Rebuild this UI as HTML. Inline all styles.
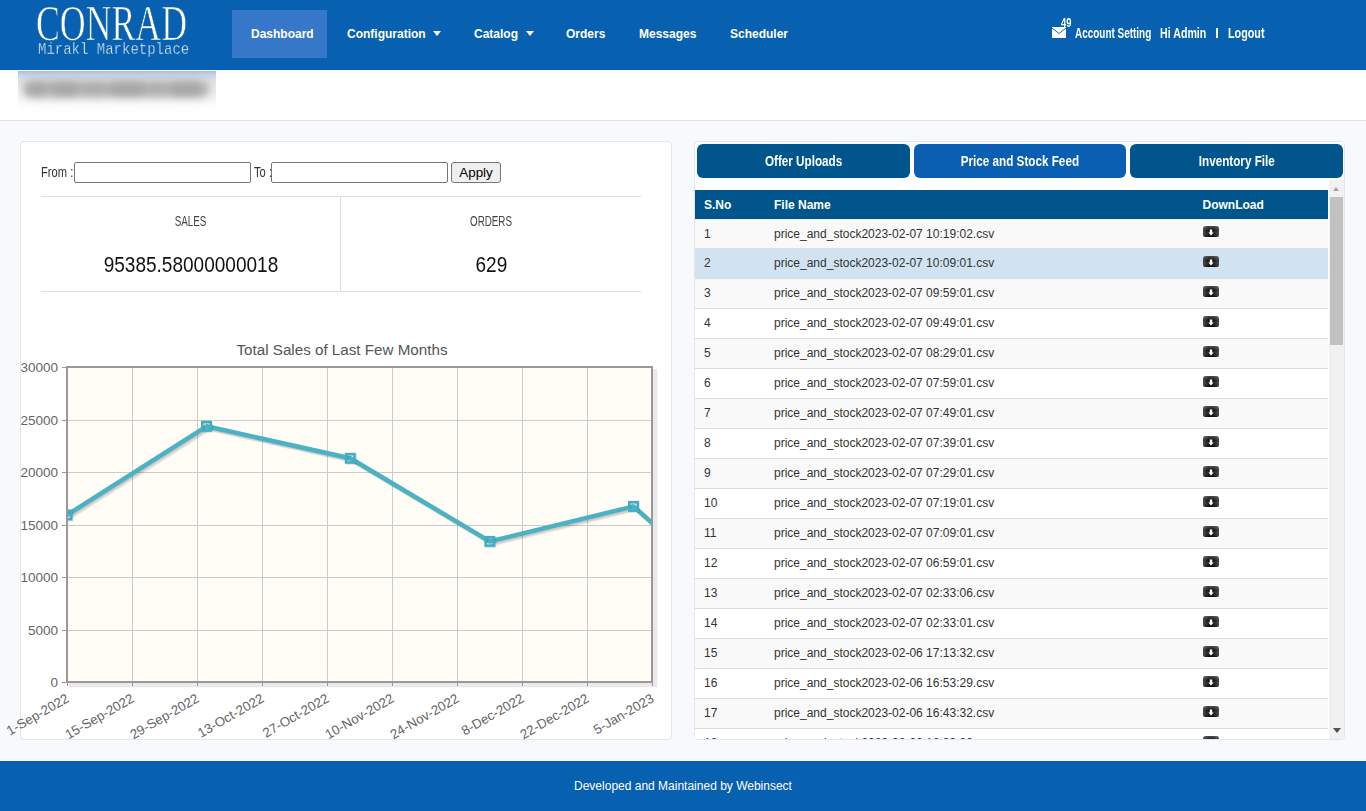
<!DOCTYPE html>
<html><head><meta charset="utf-8">
<style>
*{box-sizing:border-box}
html,body{margin:0;padding:0;width:1366px;height:811px;overflow:hidden;background:#f7f9fc;font-family:"Liberation Sans",sans-serif}
.abs{position:absolute}
#hdr{position:absolute;left:0;top:0;width:1366px;height:70px;background:#0760b0}
.nav{position:absolute;top:27px;font-weight:bold;font-size:12px;color:#fff;line-height:14px;white-space:nowrap}
.caret{position:absolute;top:31px;width:0;height:0;border-left:4px solid transparent;border-right:4px solid transparent;border-top:5px solid #fff}
#sub{position:absolute;left:0;top:70px;width:1366px;height:51px;background:#fff;border-bottom:1px solid #dfe3e8}
#foot{position:absolute;left:0;top:761px;width:1366px;height:50px;background:#0760b0;color:#fff;font-size:12px}
.panel{position:absolute;background:#fff;border:1px solid #e3e7ec;border-radius:4px}
.cond{display:inline-block;transform-origin:0 0;white-space:nowrap}
.inp{border:1px solid #767676;border-radius:2px;background:#fff}
.btn{border:1px solid #767676;border-radius:3px;background:#efefef;font-size:13.4px;line-height:19px;text-align:center;color:#000}
.stat{text-align:center;font-size:14px;line-height:16px;color:#444}
.stat{transform:scaleX(0.70)}
.big{text-align:center;font-size:22px;line-height:24px;color:#111}
.big span{display:inline-block;transform:scaleX(0.865)}
.tab{position:absolute;top:144px;height:34px;border-radius:6px;color:#fff;font-weight:bold;font-size:15px;line-height:34px;text-align:center}
.tab span{display:inline-block;transform:scaleX(0.78)}
.thead{background:#00568c;color:#fff;font-weight:bold;font-size:12px}
.thead span{position:absolute;top:8px;line-height:14px}
.trow{position:absolute;left:0;width:633px;font-size:12px;color:#333}
.trow span{position:absolute;top:7px;line-height:14px;white-space:nowrap}
.dl{position:absolute;width:16px;height:11px}
.rt{font-weight:bold;font-size:14px;line-height:16px;color:#fff;white-space:nowrap}
.rt span{display:inline-block;transform-origin:0 0}
</style></head><body>
<svg width="0" height="0" style="position:absolute"><defs>
<linearGradient id="dlh" x1="0" x2="1" y1="0" y2="0"><stop offset="0" stop-color="#444"/><stop offset="0.35" stop-color="#111"/><stop offset="0.65" stop-color="#111"/><stop offset="1" stop-color="#444"/></linearGradient>
<linearGradient id="dlv" x1="0" x2="0" y1="0" y2="1"><stop offset="0" stop-color="#fff" stop-opacity="0.25"/><stop offset="0.4" stop-color="#fff" stop-opacity="0"/><stop offset="1" stop-color="#000" stop-opacity="0.3"/></linearGradient>
<symbol id="dlicon" viewBox="0 0 16 11"><rect x="0" y="0" width="16" height="11" rx="2.5" fill="url(#dlh)"/><rect x="0" y="0" width="16" height="11" rx="2.5" fill="url(#dlv)"/><path d="M6.75 3.5 H9.25 V6.5 H10.6 L8 9.6 L5.4 6.5 H6.75 Z" fill="#fff"/></symbol>
</defs></svg>
<div id="hdr">
  <div class="abs" style="left:38px;top:0px;width:200px;height:60px">
    <div class="abs" style="left:-2px;top:-2px;font-family:'Liberation Serif',serif;font-size:50px;line-height:50px;color:#fff;-webkit-text-stroke:0.7px #0760b0;transform:scaleX(0.715);transform-origin:0 0;white-space:nowrap">CONRAD</div>
    <div class="abs" style="left:0;top:41px;font-family:'Liberation Mono',monospace;font-size:14px;line-height:14px;color:#e3ecf7;-webkit-text-stroke:0.3px #0760b0;transform:scaleY(1.15);transform-origin:0 0;white-space:nowrap">Mirakl Marketplace</div>
  </div>
  <div class="abs" style="left:232px;top:10px;width:95px;height:48px;background:#3677c9"></div>
  <div class="nav" style="left:251px">Dashboard</div>
  <div class="nav" style="left:347px">Configuration</div><div class="caret" style="left:433px"></div>
  <div class="nav" style="left:474px">Catalog</div><div class="caret" style="left:526px"></div>
  <div class="nav" style="left:566px">Orders</div>
  <div class="nav" style="left:639px">Messages</div>
  <div class="nav" style="left:730px">Scheduler</div>
  <svg class="abs" style="left:1052px;top:27px" width="14" height="11" viewBox="0 0 14 11"><rect x="0" y="0" width="14" height="11" fill="#fff"/><path d="M0 1 L7 6.5 L14 1" fill="none" stroke="#0760b0" stroke-width="0.9"/><rect x="0" y="0" width="14" height="1" fill="#fff"/></svg>
  <div class="abs rt" style="left:1061px;top:17px;font-size:12px;line-height:12px"><span style="transform:scaleX(0.78)">49</span></div>
  <div class="abs rt" style="left:1075px;top:25px"><span style="transform:scaleX(0.71)">Account Setting</span></div>
  <div class="abs rt" style="left:1160px;top:25px"><span style="transform:scaleX(0.76)">Hi Admin</span></div>
  <div class="abs" style="left:1216px;top:28px;width:2px;height:10px;background:#fff"></div>
  <div class="abs rt" style="left:1228px;top:25px"><span style="transform:scaleX(0.77)">Logout</span></div>
</div>
<div id="sub"></div>
<div class="abs" style="left:18px;top:71px;width:198px;height:40px;overflow:hidden;background:linear-gradient(#a6bedd 0px,#c9d4e1 4px,#dde1e6 9px,#e9eaec 16px,#f3f3f3 26px,#fbfbfb 33px,#ffffff 40px)">
  <div class="abs" style="left:6px;top:10px;width:186px;height:16px;background:#adadad;border-radius:8px;filter:blur(5px);opacity:0.9"></div><div class="abs" style="left:7px;top:12px;width:22px;height:12px;background:#a0a0a0;border-radius:6px;filter:blur(4px);opacity:0.7"></div><div class="abs" style="left:33px;top:12px;width:28px;height:12px;background:#a0a0a0;border-radius:6px;filter:blur(4px);opacity:0.75"></div><div class="abs" style="left:65px;top:12px;width:22px;height:12px;background:#a0a0a0;border-radius:6px;filter:blur(4px);opacity:0.45"></div><div class="abs" style="left:91px;top:12px;width:37px;height:12px;background:#a0a0a0;border-radius:6px;filter:blur(4px);opacity:0.75"></div><div class="abs" style="left:131px;top:12px;width:16px;height:12px;background:#a0a0a0;border-radius:6px;filter:blur(4px);opacity:0.45"></div><div class="abs" style="left:151px;top:12px;width:33px;height:12px;background:#a0a0a0;border-radius:6px;filter:blur(4px);opacity:0.75"></div>
</div>
<div class="panel" style="left:20px;top:141px;width:652px;height:599px"></div>
<div class="abs" style="left:41px;top:164px;font-size:14px;line-height:16px;color:#333;transform:scaleX(0.8);transform-origin:0 0;white-space:nowrap">From :</div>
<div class="abs inp" style="left:74px;top:162px;width:177px;height:21px"></div>
<div class="abs" style="left:254px;top:164px;font-size:14px;line-height:16px;color:#333;transform:scaleX(0.8);transform-origin:0 0;white-space:nowrap">To :</div>
<div class="abs inp" style="left:271px;top:162px;width:177px;height:21px"></div>
<div class="abs btn" style="left:451px;top:162px;width:50px;height:21px">Apply</div>
<div class="abs" style="left:41px;top:196px;width:600px;height:1px;background:#dddddd"></div>
<div class="abs" style="left:340px;top:197px;width:1px;height:94px;background:#dddddd"></div>
<div class="abs" style="left:41px;top:291px;width:600px;height:1px;background:#dddddd"></div>
<div class="abs stat" style="left:41px;width:299px;top:213px">SALES</div>
<div class="abs stat" style="left:341px;width:300px;top:213px">ORDERS</div>
<div class="abs big" style="left:41px;width:299px;top:253px"><span>95385.58000000018</span></div>
<div class="abs big" style="left:341px;width:300px;top:253px"><span>629</span></div>
<svg class="abs" style="left:0;top:0;overflow:visible" width="1366" height="811" viewBox="0 0 1366 811">
<defs><clipPath id="pc"><rect x="68" y="368" width="583" height="313"/></clipPath></defs>
<path d="M69 683.5 H653.5 V369" fill="none" stroke="#000" stroke-opacity="0.09" stroke-width="1.5"/>
<path d="M69 685 H655 V369" fill="none" stroke="#000" stroke-opacity="0.09" stroke-width="1.5"/>
<path d="M69 686.5 H656.5 V369" fill="none" stroke="#000" stroke-opacity="0.09" stroke-width="1.5"/>
<rect x="67" y="367" width="585" height="315" fill="#fffdf6"/>
<line x1="132.5" y1="368" x2="132.5" y2="681" stroke="#cccccc" stroke-width="1"/>
<line x1="197.5" y1="368" x2="197.5" y2="681" stroke="#cccccc" stroke-width="1"/>
<line x1="262.5" y1="368" x2="262.5" y2="681" stroke="#cccccc" stroke-width="1"/>
<line x1="327.5" y1="368" x2="327.5" y2="681" stroke="#cccccc" stroke-width="1"/>
<line x1="392.5" y1="368" x2="392.5" y2="681" stroke="#cccccc" stroke-width="1"/>
<line x1="457.5" y1="368" x2="457.5" y2="681" stroke="#cccccc" stroke-width="1"/>
<line x1="522.5" y1="368" x2="522.5" y2="681" stroke="#cccccc" stroke-width="1"/>
<line x1="587.5" y1="368" x2="587.5" y2="681" stroke="#cccccc" stroke-width="1"/>
<line x1="68" y1="420.5" x2="651" y2="420.5" stroke="#cccccc" stroke-width="1"/>
<line x1="68" y1="472.5" x2="651" y2="472.5" stroke="#cccccc" stroke-width="1"/>
<line x1="68" y1="525.5" x2="651" y2="525.5" stroke="#cccccc" stroke-width="1"/>
<line x1="68" y1="577.5" x2="651" y2="577.5" stroke="#cccccc" stroke-width="1"/>
<line x1="68" y1="630.5" x2="651" y2="630.5" stroke="#cccccc" stroke-width="1"/>
<line x1="62" y1="367.5" x2="67" y2="367.5" stroke="#999" stroke-width="1"/>
<line x1="62" y1="420.5" x2="67" y2="420.5" stroke="#999" stroke-width="1"/>
<line x1="62" y1="472.5" x2="67" y2="472.5" stroke="#999" stroke-width="1"/>
<line x1="62" y1="525.5" x2="67" y2="525.5" stroke="#999" stroke-width="1"/>
<line x1="62" y1="577.5" x2="67" y2="577.5" stroke="#999" stroke-width="1"/>
<line x1="62" y1="630.5" x2="67" y2="630.5" stroke="#999" stroke-width="1"/>
<line x1="62" y1="682.5" x2="67" y2="682.5" stroke="#999" stroke-width="1"/>
<line x1="67.5" y1="683" x2="67.5" y2="686" stroke="#999" stroke-width="1"/>
<line x1="132.5" y1="683" x2="132.5" y2="686" stroke="#999" stroke-width="1"/>
<line x1="197.5" y1="683" x2="197.5" y2="686" stroke="#999" stroke-width="1"/>
<line x1="262.5" y1="683" x2="262.5" y2="686" stroke="#999" stroke-width="1"/>
<line x1="327.5" y1="683" x2="327.5" y2="686" stroke="#999" stroke-width="1"/>
<line x1="392.5" y1="683" x2="392.5" y2="686" stroke="#999" stroke-width="1"/>
<line x1="457.5" y1="683" x2="457.5" y2="686" stroke="#999" stroke-width="1"/>
<line x1="522.5" y1="683" x2="522.5" y2="686" stroke="#999" stroke-width="1"/>
<line x1="587.5" y1="683" x2="587.5" y2="686" stroke="#999" stroke-width="1"/>
<line x1="652.5" y1="683" x2="652.5" y2="686" stroke="#999" stroke-width="1"/>
<rect x="67" y="367" width="585" height="315" fill="none" stroke="#999999" stroke-width="2"/>
<g clip-path="url(#pc)">
<path d="M67.90,515.90 L207.40,427.20 L351.20,459.20 L490.70,542.30 L634.40,507.30 L778.30,635.40" fill="none" stroke="#000" stroke-opacity="0.08" stroke-width="4.5"/>
<path d="M68.80,516.80 L208.30,428.10 L352.10,460.10 L491.60,543.20 L635.30,508.20 L779.20,636.30" fill="none" stroke="#000" stroke-opacity="0.08" stroke-width="4.5"/>
<path d="M69.70,517.70 L209.20,429.00 L353.00,461.00 L492.50,544.10 L636.20,509.10 L780.10,637.20" fill="none" stroke="#000" stroke-opacity="0.08" stroke-width="4.5"/>
<path d="M67,515 L206.5,426.3 L350.3,458.3 L489.8,541.4 L633.5,506.4 L777.4,634.5" fill="none" stroke="#4bb2c5" stroke-width="4.5" stroke-linejoin="round"/>
<rect x="62.8" y="510.8" width="8.4" height="8.4" fill="none" stroke="#000" stroke-opacity="0.1" stroke-width="2.6" transform="translate(1,1)"/>
<rect x="62.8" y="510.8" width="8.4" height="8.4" fill="none" stroke="#3fb0c4" stroke-width="2.6"/>
<rect x="202.3" y="422.1" width="8.4" height="8.4" fill="none" stroke="#000" stroke-opacity="0.1" stroke-width="2.6" transform="translate(1,1)"/>
<rect x="202.3" y="422.1" width="8.4" height="8.4" fill="none" stroke="#3fb0c4" stroke-width="2.6"/>
<rect x="346.1" y="454.1" width="8.4" height="8.4" fill="none" stroke="#000" stroke-opacity="0.1" stroke-width="2.6" transform="translate(1,1)"/>
<rect x="346.1" y="454.1" width="8.4" height="8.4" fill="none" stroke="#3fb0c4" stroke-width="2.6"/>
<rect x="485.6" y="537.1999999999999" width="8.4" height="8.4" fill="none" stroke="#000" stroke-opacity="0.1" stroke-width="2.6" transform="translate(1,1)"/>
<rect x="485.6" y="537.1999999999999" width="8.4" height="8.4" fill="none" stroke="#3fb0c4" stroke-width="2.6"/>
<rect x="629.3" y="502.2" width="8.4" height="8.4" fill="none" stroke="#000" stroke-opacity="0.1" stroke-width="2.6" transform="translate(1,1)"/>
<rect x="629.3" y="502.2" width="8.4" height="8.4" fill="none" stroke="#3fb0c4" stroke-width="2.6"/>
</g>
<text x="58" y="372" text-anchor="end" font-size="13.5" fill="#666">30000</text>
<text x="58" y="425" text-anchor="end" font-size="13.5" fill="#666">25000</text>
<text x="58" y="477" text-anchor="end" font-size="13.5" fill="#666">20000</text>
<text x="58" y="530" text-anchor="end" font-size="13.5" fill="#666">15000</text>
<text x="58" y="582" text-anchor="end" font-size="13.5" fill="#666">10000</text>
<text x="58" y="635" text-anchor="end" font-size="13.5" fill="#666">5000</text>
<text x="58" y="687" text-anchor="end" font-size="13.5" fill="#666">0</text>
<text transform="translate(70,701) rotate(-30)" text-anchor="end" font-size="13.3" fill="#666">1-Sep-2022</text>
<text transform="translate(135,701) rotate(-30)" text-anchor="end" font-size="13.3" fill="#666">15-Sep-2022</text>
<text transform="translate(200,701) rotate(-30)" text-anchor="end" font-size="13.3" fill="#666">29-Sep-2022</text>
<text transform="translate(265,701) rotate(-30)" text-anchor="end" font-size="13.3" fill="#666">13-Oct-2022</text>
<text transform="translate(330,701) rotate(-30)" text-anchor="end" font-size="13.3" fill="#666">27-Oct-2022</text>
<text transform="translate(395,701) rotate(-30)" text-anchor="end" font-size="13.3" fill="#666">10-Nov-2022</text>
<text transform="translate(460,701) rotate(-30)" text-anchor="end" font-size="13.3" fill="#666">24-Nov-2022</text>
<text transform="translate(525,701) rotate(-30)" text-anchor="end" font-size="13.3" fill="#666">8-Dec-2022</text>
<text transform="translate(590,701) rotate(-30)" text-anchor="end" font-size="13.3" fill="#666">22-Dec-2022</text>
<text transform="translate(655,701) rotate(-30)" text-anchor="end" font-size="13.3" fill="#666">5-Jan-2023</text>
<text x="342" y="354.5" text-anchor="middle" font-size="15.2" fill="#555">Total Sales of Last Few Months</text>
</svg>
<div class="panel" style="left:694px;top:141px;width:651px;height:599px"></div>
<div class="tab" style="left:697px;width:213px;background:#00568c"><span>Offer Uploads</span></div>
<div class="tab" style="left:914px;width:212px;background:#0b5fb3"><span>Price and Stock Feed</span></div>
<div class="tab" style="left:1130px;width:213px;background:#00568c"><span>Inventory File</span></div>
<div class="abs" style="left:695px;top:180px;width:649px;height:559px;overflow:hidden">
<div class="abs thead" style="left:0;top:10px;width:633px;height:29px"><span style="left:9px">S.No</span><span style="left:79px">File Name</span><span style="left:507.5px">DownLoad</span></div>
<div class="abs trow" style="top:39px;height:29px;background:#f9f9f9;border-top:1px solid #efefef"><span style="left:9px">1</span><span style="left:79px">price_and_stock2023-02-07 10:19:02.csv</span><svg class="dl" style="left:508px;top:6px" width="16" height="11"><use href="#dlicon"/></svg></div>
<div class="abs trow" style="top:68px;height:30px;background:#d1e3f0;border-top:1px solid #dddddd"><span style="left:9px">2</span><span style="left:79px">price_and_stock2023-02-07 10:09:01.csv</span><svg class="dl" style="left:508px;top:7px" width="16" height="11"><use href="#dlicon"/></svg></div>
<div class="abs trow" style="top:98px;height:30px;background:#f9f9f9;border-top:1px solid #dddddd"><span style="left:9px">3</span><span style="left:79px">price_and_stock2023-02-07 09:59:01.csv</span><svg class="dl" style="left:508px;top:7px" width="16" height="11"><use href="#dlicon"/></svg></div>
<div class="abs trow" style="top:128px;height:30px;background:#ffffff;border-top:1px solid #dddddd"><span style="left:9px">4</span><span style="left:79px">price_and_stock2023-02-07 09:49:01.csv</span><svg class="dl" style="left:508px;top:7px" width="16" height="11"><use href="#dlicon"/></svg></div>
<div class="abs trow" style="top:158px;height:30px;background:#f9f9f9;border-top:1px solid #dddddd"><span style="left:9px">5</span><span style="left:79px">price_and_stock2023-02-07 08:29:01.csv</span><svg class="dl" style="left:508px;top:7px" width="16" height="11"><use href="#dlicon"/></svg></div>
<div class="abs trow" style="top:188px;height:30px;background:#ffffff;border-top:1px solid #dddddd"><span style="left:9px">6</span><span style="left:79px">price_and_stock2023-02-07 07:59:01.csv</span><svg class="dl" style="left:508px;top:7px" width="16" height="11"><use href="#dlicon"/></svg></div>
<div class="abs trow" style="top:218px;height:30px;background:#f9f9f9;border-top:1px solid #dddddd"><span style="left:9px">7</span><span style="left:79px">price_and_stock2023-02-07 07:49:01.csv</span><svg class="dl" style="left:508px;top:7px" width="16" height="11"><use href="#dlicon"/></svg></div>
<div class="abs trow" style="top:248px;height:30px;background:#ffffff;border-top:1px solid #dddddd"><span style="left:9px">8</span><span style="left:79px">price_and_stock2023-02-07 07:39:01.csv</span><svg class="dl" style="left:508px;top:7px" width="16" height="11"><use href="#dlicon"/></svg></div>
<div class="abs trow" style="top:278px;height:30px;background:#f9f9f9;border-top:1px solid #dddddd"><span style="left:9px">9</span><span style="left:79px">price_and_stock2023-02-07 07:29:01.csv</span><svg class="dl" style="left:508px;top:7px" width="16" height="11"><use href="#dlicon"/></svg></div>
<div class="abs trow" style="top:308px;height:30px;background:#ffffff;border-top:1px solid #dddddd"><span style="left:9px">10</span><span style="left:79px">price_and_stock2023-02-07 07:19:01.csv</span><svg class="dl" style="left:508px;top:7px" width="16" height="11"><use href="#dlicon"/></svg></div>
<div class="abs trow" style="top:338px;height:30px;background:#f9f9f9;border-top:1px solid #dddddd"><span style="left:9px">11</span><span style="left:79px">price_and_stock2023-02-07 07:09:01.csv</span><svg class="dl" style="left:508px;top:7px" width="16" height="11"><use href="#dlicon"/></svg></div>
<div class="abs trow" style="top:368px;height:30px;background:#ffffff;border-top:1px solid #dddddd"><span style="left:9px">12</span><span style="left:79px">price_and_stock2023-02-07 06:59:01.csv</span><svg class="dl" style="left:508px;top:7px" width="16" height="11"><use href="#dlicon"/></svg></div>
<div class="abs trow" style="top:398px;height:30px;background:#f9f9f9;border-top:1px solid #dddddd"><span style="left:9px">13</span><span style="left:79px">price_and_stock2023-02-07 02:33:06.csv</span><svg class="dl" style="left:508px;top:7px" width="16" height="11"><use href="#dlicon"/></svg></div>
<div class="abs trow" style="top:428px;height:30px;background:#ffffff;border-top:1px solid #dddddd"><span style="left:9px">14</span><span style="left:79px">price_and_stock2023-02-07 02:33:01.csv</span><svg class="dl" style="left:508px;top:7px" width="16" height="11"><use href="#dlicon"/></svg></div>
<div class="abs trow" style="top:458px;height:30px;background:#f9f9f9;border-top:1px solid #dddddd"><span style="left:9px">15</span><span style="left:79px">price_and_stock2023-02-06 17:13:32.csv</span><svg class="dl" style="left:508px;top:7px" width="16" height="11"><use href="#dlicon"/></svg></div>
<div class="abs trow" style="top:488px;height:30px;background:#ffffff;border-top:1px solid #dddddd"><span style="left:9px">16</span><span style="left:79px">price_and_stock2023-02-06 16:53:29.csv</span><svg class="dl" style="left:508px;top:7px" width="16" height="11"><use href="#dlicon"/></svg></div>
<div class="abs trow" style="top:518px;height:30px;background:#f9f9f9;border-top:1px solid #dddddd"><span style="left:9px">17</span><span style="left:79px">price_and_stock2023-02-06 16:43:32.csv</span><svg class="dl" style="left:508px;top:7px" width="16" height="11"><use href="#dlicon"/></svg></div>
<div class="abs trow" style="top:548px;height:30px;background:#ffffff;border-top:1px solid #dddddd"><span style="left:9px">18</span><span style="left:79px">price_and_stock2023-02-06 16:33:30.csv</span><svg class="dl" style="left:508px;top:7px" width="16" height="11"><use href="#dlicon"/></svg></div>
<div class="abs" style="left:634px;top:0;width:15px;height:559px;background:#f1f1f1"></div>
<div class="abs" style="left:635px;top:17px;width:13px;height:148px;background:#c1c1c1"></div>
<div class="abs" style="left:638px;top:7px;width:0;height:0;border-left:3.5px solid transparent;border-right:3.5px solid transparent;border-bottom:4px solid #a3a3a3"></div>
<div class="abs" style="left:637.5px;top:548px;width:0;height:0;border-left:4px solid transparent;border-right:4px solid transparent;border-top:5px solid #505050"></div>
</div>
<div id="foot"><div class="abs" style="left:574px;top:778px;"></div><div style="position:absolute;left:0;width:1366px;top:18px;text-align:center;line-height:14px">Developed and Maintained by Webinsect</div></div>
</body></html>
